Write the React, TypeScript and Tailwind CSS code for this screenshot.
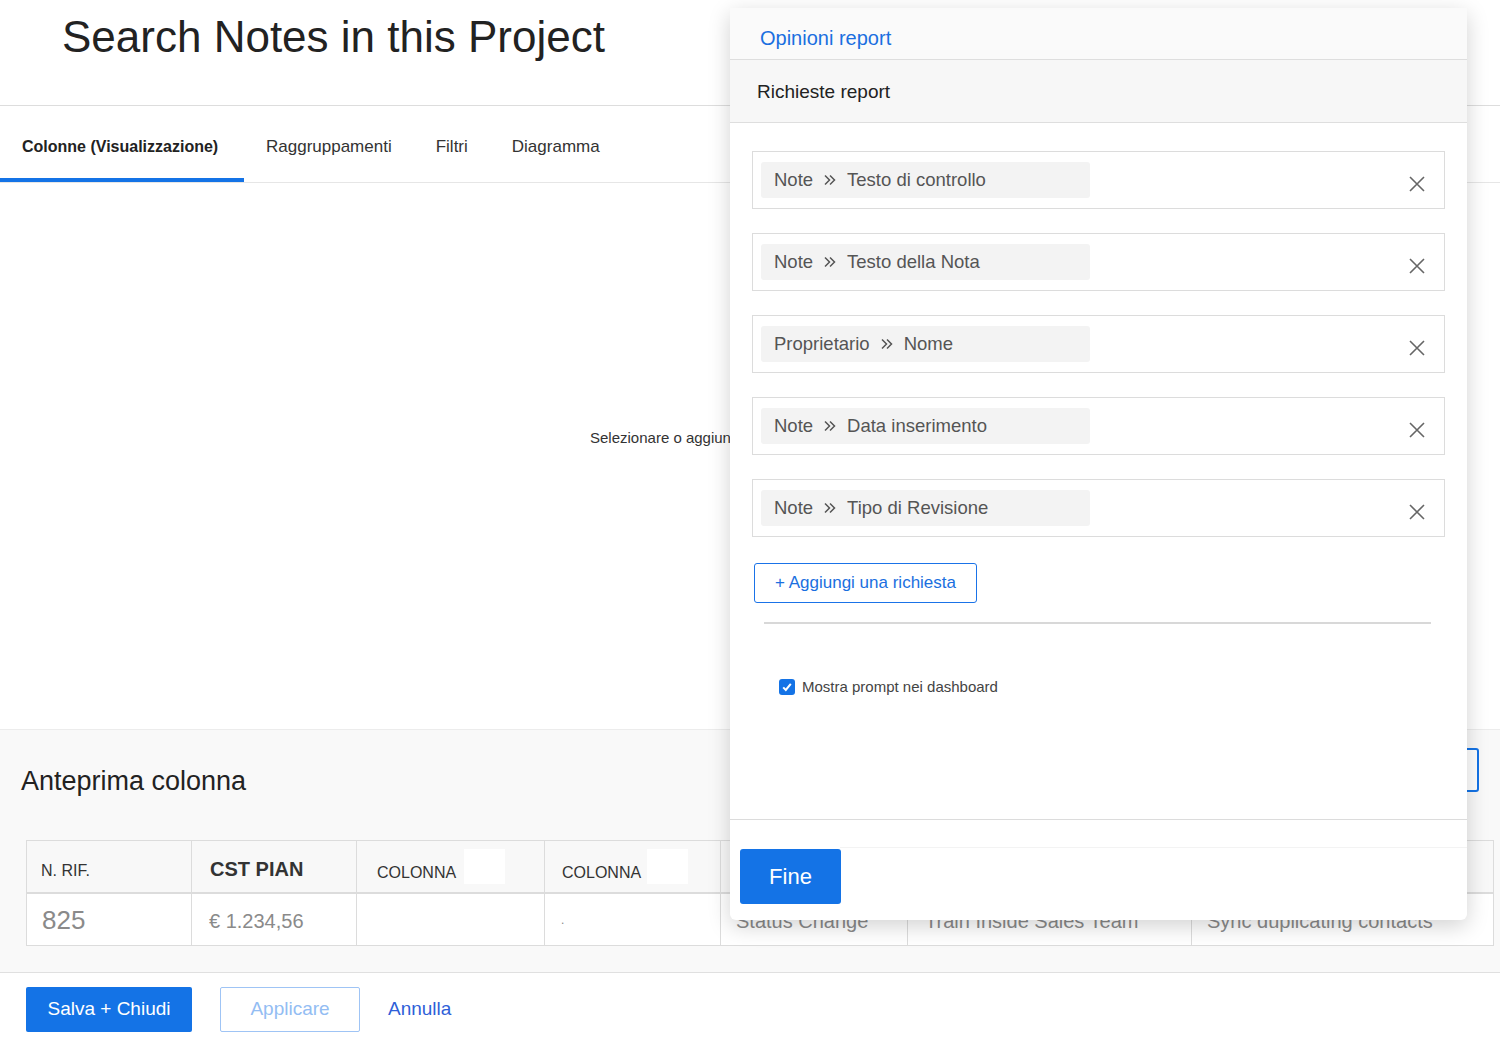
import React from "react";

const font = { fontFamily: '"Liberation Sans", Arial, sans-serif' };

const requests = [
  ["Note", "Testo di controllo"],
  ["Note", "Testo della Nota"],
  ["Proprietario", "Nome"],
  ["Note", "Data inserimento"],
  ["Note", "Tipo di Revisione"],
];

function CloseIcon() {
  return (
    <svg width="18" height="18" viewBox="0 0 18 18" fill="none">
      <path d="M2 2L16 16M16 2L2 16" stroke="#666" strokeWidth="1.6" />
    </svg>
  );
}

function Chevrons() {
  return (
    <svg width="14" height="12" viewBox="0 0 14 12" fill="none" className="mx-[10px]">
      <path d="M2 1.5L6.5 6L2 10.5M7 1.5L11.5 6L7 10.5" stroke="#555" strokeWidth="1.5" />
    </svg>
  );
}

function RequestRow({ a, b }: { a: string; b: string }) {
  return (
    <div className="h-[58px] border border-[#dcdcdc] px-[8px] flex items-center justify-between">
      <div className="w-[329px] h-[36px] bg-[#f3f3f3] rounded-[3px] px-[13px] flex items-center text-[18.5px] text-[#555]">
        <span>{a}</span>
        <Chevrons />
        <span>{b}</span>
      </div>
      <div className="pr-[10px] pt-[8px]">
        <CloseIcon />
      </div>
    </div>
  );
}

function ReportPanel() {
  return (
    <div className="absolute left-[730px] top-[8px] w-[737px] h-[912px] bg-white rounded-b-[6px] shadow-[0_6px_22px_rgba(0,0,0,0.18)] flex flex-col">
      <div className="h-[52px] bg-[#fafafa] border-b border-[#dedede] pl-[30px] pt-[15px] text-[20px] text-[#1a6fe0]">
        Opinioni report
      </div>
      <div className="h-[63px] bg-[#f7f7f7] border-b border-[#dedede] pl-[27px] pt-[2px] flex items-center text-[19px] font-medium text-[#222]">
        Richieste report
      </div>
      <div className="flex-1 px-[22px] pt-[28px]">
        <div className="flex flex-col gap-[24px]">
          {requests.map(([a, b], i) => (
            <RequestRow key={i} a={a} b={b} />
          ))}
        </div>
        <button className="mt-[26px] ml-[2px] w-[223px] h-[40px] border border-[#1a73e8] rounded-[3px] text-[17px] text-[#1a6fe0] bg-white">
          + Aggiungi una richiesta
        </button>
        <div className="mt-[19px] ml-[12px] w-[667px] h-[2px] bg-[#d8d8d8]" />
        <label className="mt-[52px] ml-[27px] flex items-center gap-[7px] text-[15px] text-[#444]">
          <span className="w-[16px] h-[16px] rounded-[3px] bg-[#1473e6] flex items-center justify-center">
            <svg width="12" height="12" viewBox="0 0 12 12" fill="none">
              <path d="M2.2 6.4L4.8 9L9.8 2.8" stroke="#fff" strokeWidth="2" />
            </svg>
          </span>
          Mostra prompt nei dashboard
        </label>
      </div>
      <div className="h-[101px] border-t border-[#dcdcdc] flex flex-col">
        <div className="h-[28px] border-b border-[#f3f3f3] ml-[110px]" />
        <div className="pl-[10px] pt-[1px]">
          <button className="w-[101px] h-[55px] bg-[#1473e6] rounded-[3px] text-white text-[22px]">
            Fine
          </button>
        </div>
      </div>
    </div>
  );
}

const cols = "grid grid-cols-[164px_165px_188px_176px_187px_284px_302px]";

export default function App() {
  return (
    <div className="relative w-[1500px] h-[1048px] bg-white overflow-hidden flex flex-col" style={font}>
      <div className="h-[106px] border-b border-[#dddddd] pl-[62px] pt-[11px]">
        <h1 className="text-[44px] leading-[52px] text-[#222]">Search Notes in this Project</h1>
      </div>
      <div className="h-[77px] border-b border-[#e6e6e6] flex text-[17px] text-[#333]">
        <div className="w-[244px] px-[22px] flex items-center pt-[9px] border-b-4 border-[#1473e6] text-[16px] font-bold text-[#222]">
          Colonne (Visualizzazione)
        </div>
        <div className="px-[22px] flex items-center pt-[5px]">Raggruppamenti</div>
        <div className="px-[22px] flex items-center pt-[5px]">Filtri</div>
        <div className="px-[22px] flex items-center pt-[5px]">Diagramma</div>
      </div>
      <div className="flex-1 pl-[590px] pt-[244px] text-[15px] text-[#333]">
        Selezionare o aggiungere le colonne
      </div>
      <div className="h-[243px] bg-[#f9f9f9] border-t border-[#ececec] pt-[18px] px-[21px]">
        <div className="flex items-start justify-between">
          <div className="pt-[17px] text-[27px] leading-[32px] text-[#222]">Anteprima colonna</div>
          <button className="w-[170px] h-[44px] border-2 border-[#1473e6] rounded-[3px] bg-white" />
        </div>
        <div className={`${cols} w-[1468px] mt-[43px] ml-[5px] border border-[#dcdcdc] bg-white`}>
          <div className="h-[53px] bg-[#f8f8f8] border-b-2 border-[#dcdcdc] pl-[14px] pt-[8px] flex items-center text-[16px] font-medium text-[#333]">
            N. RIF.
          </div>
          <div className="h-[53px] bg-[#f8f8f8] border-b-2 border-l border-[#dcdcdc] pl-[18px] pt-[4px] flex items-center text-[20px] font-bold text-[#333]">
            CST PIAN
          </div>
          <div className="h-[53px] bg-[#f8f8f8] border-b-2 border-l border-[#dcdcdc] pl-[20px] flex items-center gap-[8px] text-[16px] text-[#333]">
            <span className="pt-[12px]">COLONNA</span>
            <span className="w-[41px] h-[35px] bg-white" />
          </div>
          <div className="h-[53px] bg-[#f8f8f8] border-b-2 border-l border-[#dcdcdc] pl-[17px] flex items-center gap-[6px] text-[16px] text-[#333]">
            <span className="pt-[12px]">COLONNA</span>
            <span className="w-[41px] h-[35px] bg-white" />
          </div>
          <div className="h-[53px] bg-[#f8f8f8] border-b-2 border-l border-[#dcdcdc]" />
          <div className="h-[53px] bg-[#f8f8f8] border-b-2 border-l border-[#dcdcdc]" />
          <div className="h-[53px] bg-[#f8f8f8] border-b-2 border-l border-[#dcdcdc]" />

          <div className="h-[51px] pl-[15px] pt-[2px] flex items-center text-[26px] text-[#8a8a8a]">825</div>
          <div className="h-[51px] border-l border-[#dcdcdc] pl-[17px] pt-[2px] flex items-center text-[20px] text-[#8a8a8a]">
            € 1.234,56
          </div>
          <div className="h-[51px] border-l border-[#dcdcdc]" />
          <div className="h-[51px] border-l border-[#dcdcdc] pl-[16px] flex items-center text-[12px] text-[#888]">.</div>
          <div className="h-[51px] border-l border-[#dcdcdc] pl-[15px] pt-[2px] flex items-center text-[20px] text-[#8a8a8a]">
            Status Change
          </div>
          <div className="h-[51px] border-l border-[#dcdcdc] pl-[17px] pt-[2px] flex items-center text-[20px] text-[#8a8a8a]">
            Train Inside Sales Team
          </div>
          <div className="h-[51px] border-l border-[#dcdcdc] pl-[15px] pt-[2px] flex items-center text-[20px] text-[#8a8a8a]">
            Sync duplicating contacts
          </div>
        </div>
      </div>
      <div className="h-[76px] border-t border-[#e0e0e0] pl-[26px] pt-[14px] flex items-start gap-[28px] text-[19px]">
        <button className="w-[166px] h-[45px] bg-[#1473e6] rounded-[2px] text-white">Salva + Chiudi</button>
        <button className="w-[140px] h-[45px] border border-[#9fc4f5] rounded-[2px] text-[#93bdf3] bg-white">
          Applicare
        </button>
        <button className="h-[45px] text-[#2f5fd8]">Annulla</button>
      </div>
      <ReportPanel />
    </div>
  );
}
